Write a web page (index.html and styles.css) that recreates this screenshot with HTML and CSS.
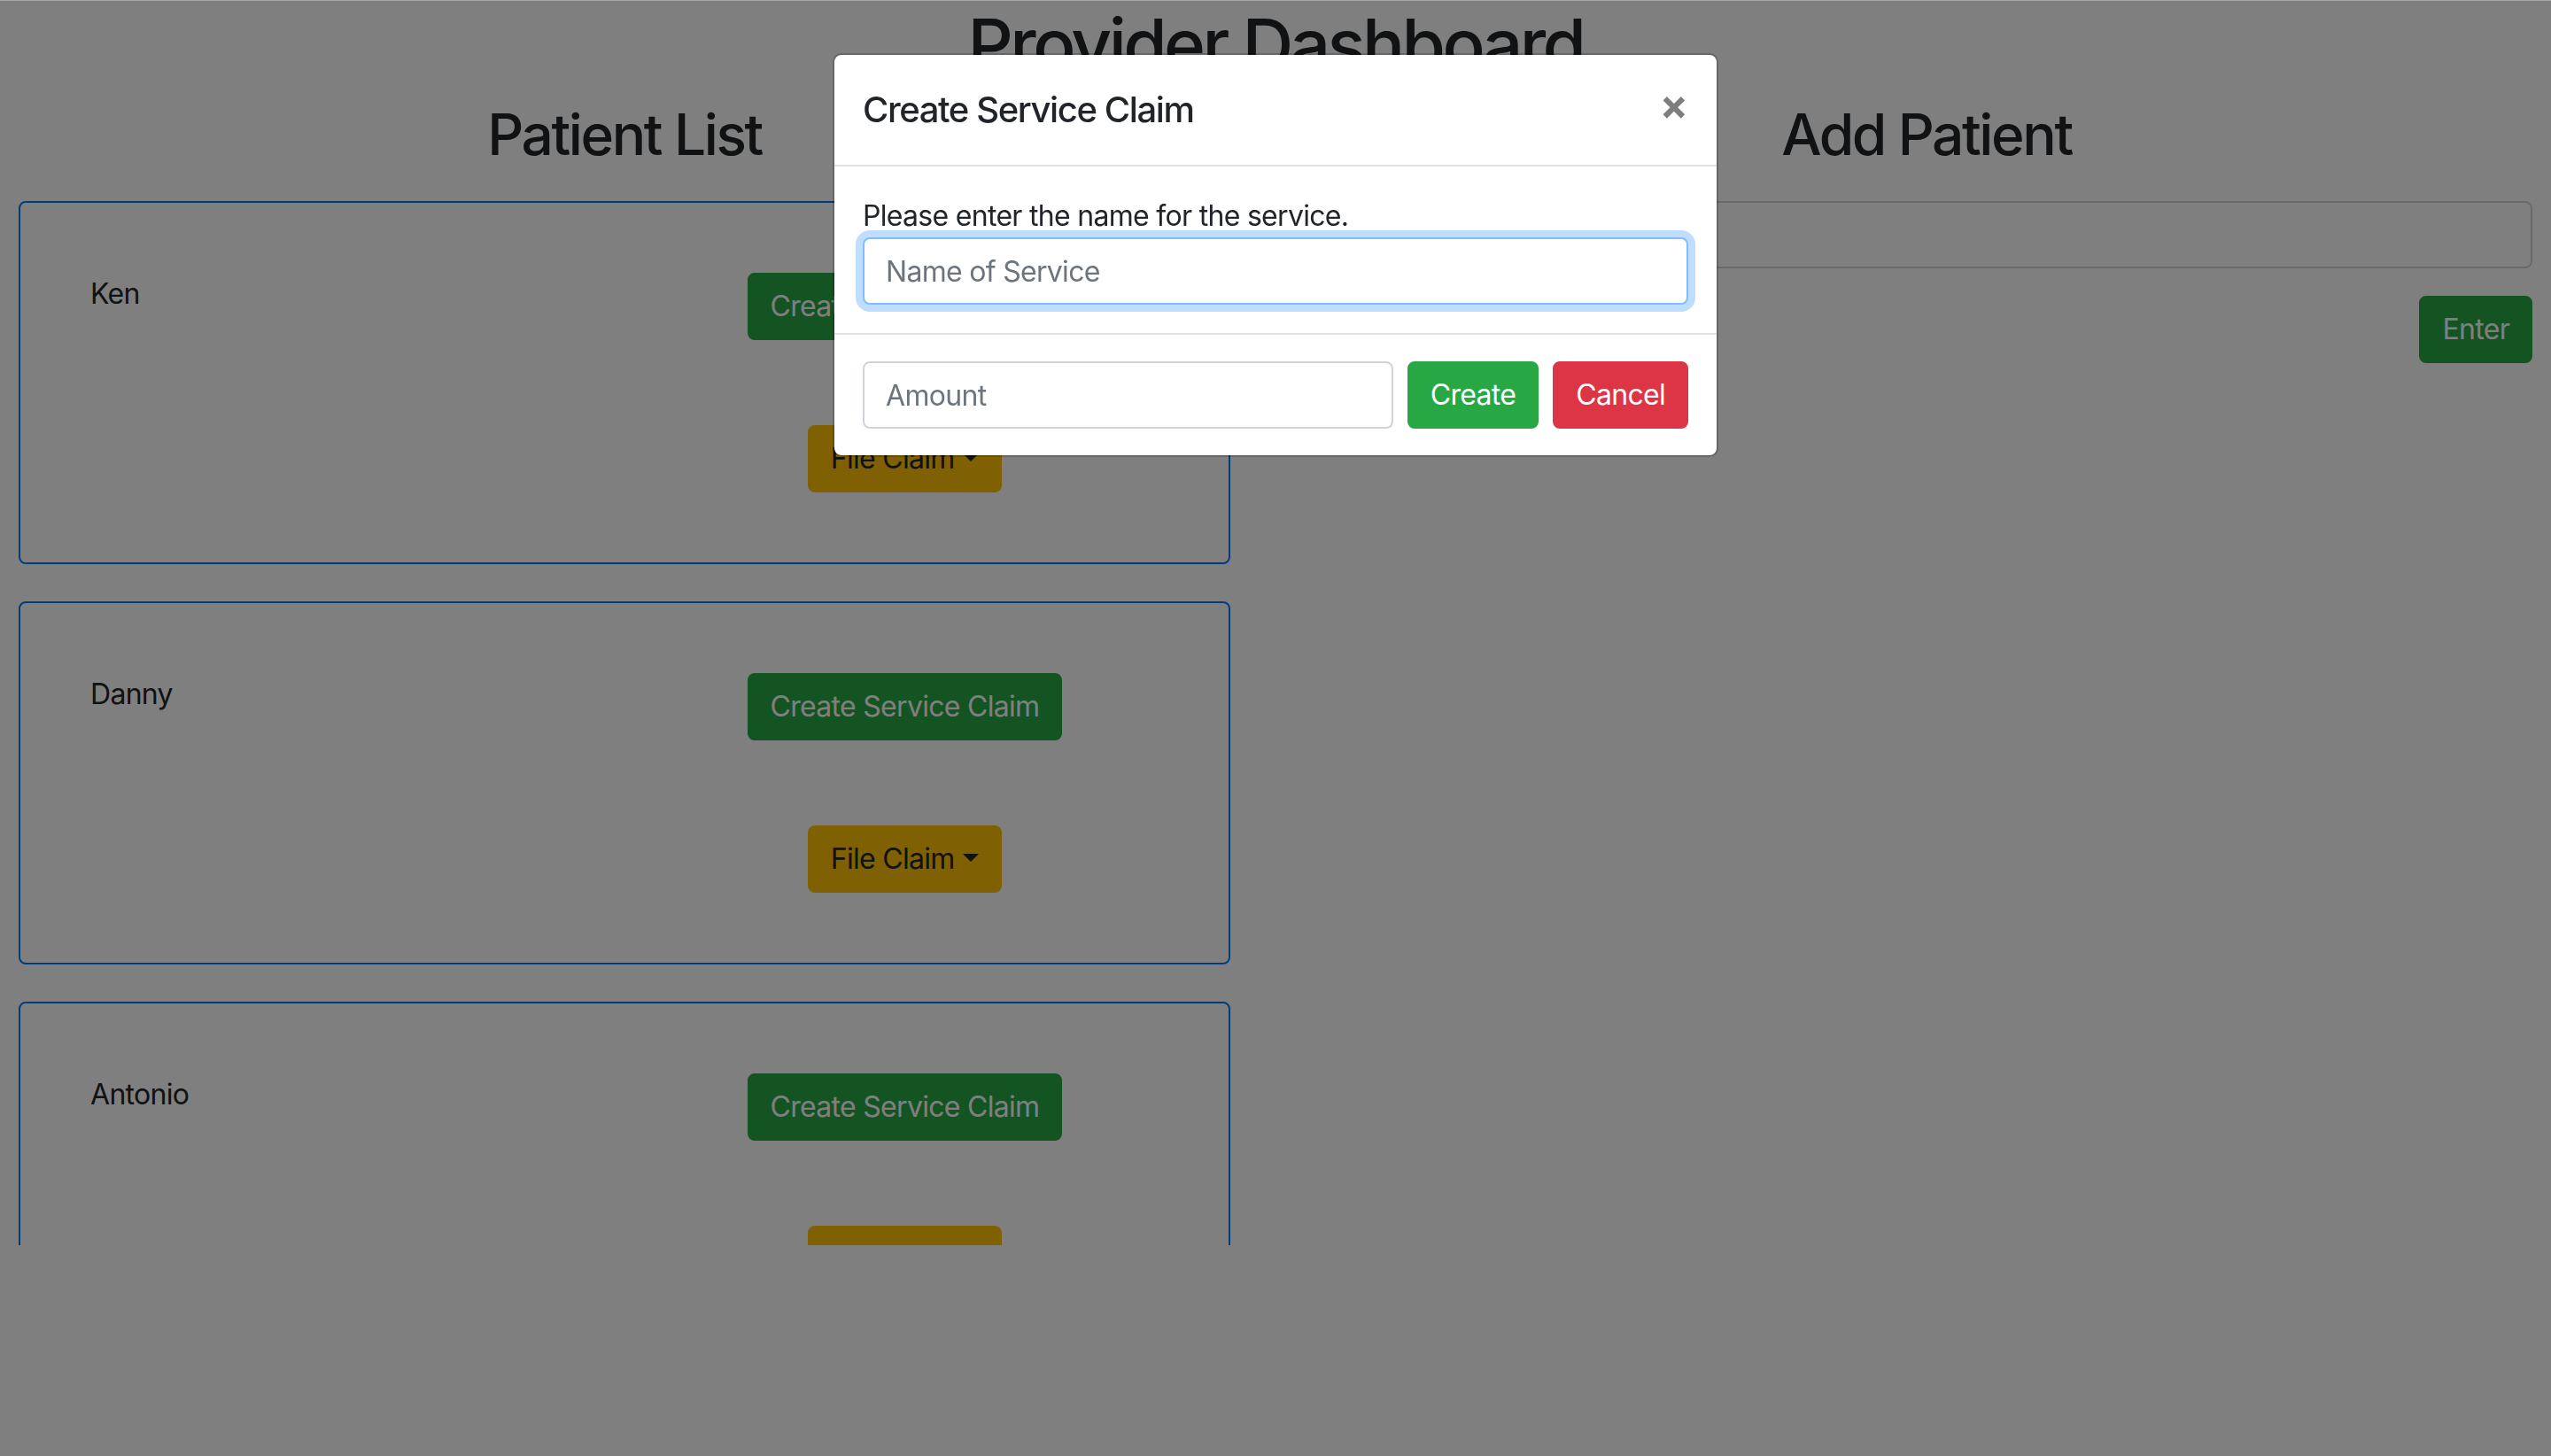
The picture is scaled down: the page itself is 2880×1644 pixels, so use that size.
FILE: index.html
```html
<!DOCTYPE html>
<html lang="en">
<head>
<meta charset="utf-8">
<title>Provider Dashboard</title>
<link rel="stylesheet" href="styles.css">
</head>
<body>
<div class="page">
  <h1 class="page-title">Provider Dashboard</h1>
  <div class="columns">
    <section class="column">
      <h2 class="column-title">Patient List</h2>
      <div class="patient-list">
        <div class="patient-card">
          <div class="patient-name">Ken</div>
          <div class="patient-actions">
            <button class="btn btn-success">Create Service Claim</button>
            <button class="btn btn-warning dropdown-toggle">File Claim</button>
          </div>
        </div>
        <div class="patient-card">
          <div class="patient-name">Danny</div>
          <div class="patient-actions">
            <button class="btn btn-success">Create Service Claim</button>
            <button class="btn btn-warning dropdown-toggle">File Claim</button>
          </div>
        </div>
        <div class="patient-card">
          <div class="patient-name">Antonio</div>
          <div class="patient-actions">
            <button class="btn btn-success">Create Service Claim</button>
            <button class="btn btn-warning dropdown-toggle">File Claim</button>
          </div>
        </div>
      </div>
    </section>
    <section class="column">
      <h2 class="column-title">Add Patient</h2>
      <input class="form-control" type="text">
      <div class="enter-row">
        <button class="btn btn-success">Enter</button>
      </div>
    </section>
  </div>
</div>

<div class="modal-backdrop"></div>

<div class="modal">
  <div class="modal-dialog">
    <div class="modal-content">
      <div class="modal-header">
        <h5 class="modal-title">Create Service Claim</h5>
        <button class="close" type="button">&times;</button>
      </div>
      <div class="modal-body">
        <div class="modal-label">Please enter the name for the service.</div>
        <input class="form-control focused" type="text" placeholder="Name of Service">
      </div>
      <div class="modal-footer">
        <input class="form-control amount" type="text" placeholder="Amount">
        <button class="btn btn-success-solid">Create</button>
        <button class="btn btn-danger">Cancel</button>
      </div>
    </div>
  </div>
</div>
</body>
</html>
```

FILE: styles.css
```css
* {
  box-sizing: border-box;
}

html, body {
  margin: 0;
  padding: 0;
}

body {
  background: #fff;
  color: #212529;
  font-family: Inter, "Noto Sans", "Liberation Sans", sans-serif;
  font-size: 32px;
  line-height: 48px;
  letter-spacing: -0.7px;
  overflow: hidden;
}

.page {
  height: 1406px;
  overflow: hidden;
}

.page-title {
  margin: 2px 0 16px;
  font-size: 80px;
  line-height: 96px;
  font-weight: 500;
  text-align: center;
  letter-spacing: -3.6px;
}

.columns {
  display: grid;
  grid-template-columns: 1fr 1fr;
  column-gap: 102px;
  padding: 0 21px;
}

.column-title {
  margin: 0 0 36px;
  font-size: 64px;
  line-height: 76.8px;
  font-weight: 500;
  text-align: center;
  letter-spacing: -2.4px;
}

.patient-list {
  display: flex;
  flex-direction: column;
  gap: 42px;
}

.patient-card {
  display: grid;
  grid-template-columns: 1fr 1fr;
  border: 2px solid #007bff;
  border-radius: 8px;
  padding: 79px 59px 79px 79px;
  height: 410px;
}

.patient-actions {
  display: flex;
  flex-direction: column;
  align-items: center;
  gap: 96px;
}

.btn {
  font-family: inherit;
  font-size: 32px;
  line-height: 48px;
  font-weight: 400;
  letter-spacing: -0.7px;
  padding: 12px 24px;
  border: 2px solid transparent;
  border-radius: 8px;
  cursor: pointer;
  white-space: nowrap;
}

.btn-success,
.btn-success-solid {
  background: #28a745;
  border-color: #28a745;
  color: #fff;
}

.btn-warning {
  background: #ffc107;
  border-color: #ffc107;
  color: #212529;
}

.btn-danger {
  background: #dc3545;
  border-color: #dc3545;
  color: #fff;
}

.dropdown-toggle::after {
  content: "";
  display: inline-block;
  width: 0;
  height: 0;
  margin-left: 0.3em;
  vertical-align: 0.255em;
  border-top: 0.3em solid;
  border-right: 0.3em solid transparent;
  border-left: 0.3em solid transparent;
  border-bottom: 0;
}

.form-control {
  display: block;
  width: 100%;
  height: 76px;
  padding: 12px 24px;
  font-family: inherit;
  font-size: 32px;
  line-height: 48px;
  letter-spacing: -0.7px;
  color: #495057;
  background: #fff;
  border: 2px solid #ced4da;
  border-radius: 8px;
  outline: none;
}

.form-control::placeholder {
  color: #6c757d;
  opacity: 1;
}

.form-control.focused {
  border-color: #80bdff;
  box-shadow: 0 0 0 8px rgba(0, 123, 255, 0.25);
}

.enter-row {
  display: flex;
  justify-content: flex-end;
  margin-top: 31px;
}

.modal-backdrop {
  position: fixed;
  inset: 0;
  background: rgba(0, 0, 0, 0.5);
  box-shadow: inset 0 1px 0 rgba(255, 255, 255, 0.3);
}

.modal {
  position: fixed;
  inset: 0;
}

.modal-dialog {
  width: 1000px;
  margin: 60px auto 0;
}

.modal-content {
  background: #fff;
  background-clip: padding-box;
  border: 2px solid rgba(0, 0, 0, 0.2);
  border-radius: 10px;
}

.modal-header {
  display: flex;
  align-items: flex-start;
  justify-content: space-between;
  padding: 32px;
  border-bottom: 2px solid #dee2e6;
}

.modal-title {
  margin: 0;
  font-size: 40px;
  line-height: 60px;
  font-weight: 500;
  letter-spacing: -1.4px;
}

.close {
  margin: -32px -32px -32px auto;
  padding: 32px;
  background: transparent;
  border: 0;
  font-family: inherit;
  font-size: 48px;
  line-height: 48px;
  font-weight: 700;
  color: #000;
  opacity: 0.5;
  text-shadow: 0 2px 0 #fff;
}

.modal-body {
  padding: 32px;
}

.modal-footer {
  display: flex;
  align-items: center;
  gap: 16px;
  padding: 30px 32px;
  border-top: 2px solid #dee2e6;
}

.modal-footer .amount {
  flex: 1;
  width: auto;
}
```
